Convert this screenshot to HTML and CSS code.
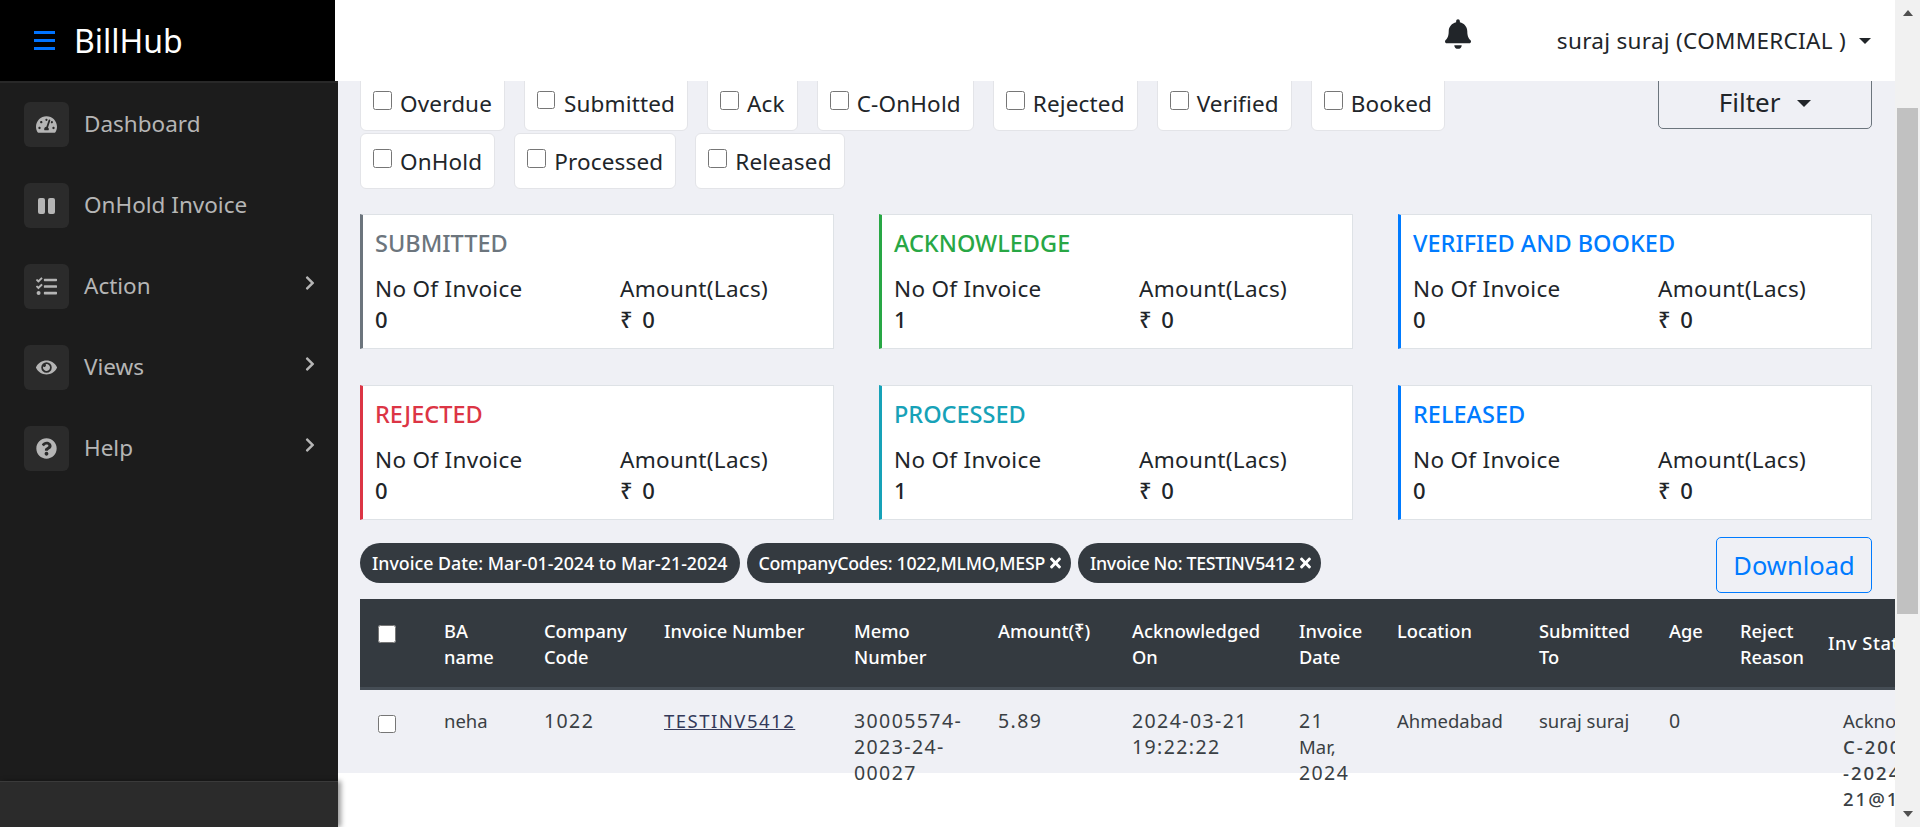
FILE: index.html
```html
<!DOCTYPE html>
<html lang="en">
<head>
    <meta charset="UTF-8">
    <meta name="viewport" content="width=device-width, initial-scale=1.0">
    <title>BillHub</title>
    <link rel="stylesheet" href="styles.css">
</head>
<body>
    <div class="app">
        <div class="page">
            <header class="topbar">
                <div class="brand">
                    <span class="burger"><i></i><i></i><i></i></span>
                    <span class="brand-name">BillHub</span>
                </div>
                <div class="topbar-right">
                    <svg class="bell" viewBox="0 0 448 512"><path d="M224 512c35.32 0 63.97-28.65 63.97-64H160.03c0 35.35 28.65 64 63.97 64zm215.39-149.71c-19.32-20.76-55.47-51.99-55.47-154.29 0-77.7-54.48-139.9-127.94-155.16V32c0-17.67-14.32-32-31.98-32s-31.98 14.33-31.98 32v20.84C118.56 68.1 64.08 130.3 64.08 208c0 102.3-36.15 133.53-55.47 154.29-6 6.45-8.66 14.16-8.61 21.71.11 16.4 12.98 32 32.1 32h383.8c19.12 0 32-15.6 32.1-32 .05-7.55-2.61-15.27-8.61-21.71z"/></svg>
                    <span class="user">suraj suraj (COMMERCIAL )</span>
                    <span class="caret"></span>
                </div>
            </header>

            <div class="layout">
                <aside class="sidebar">
                    <nav class="menu">
                        <a class="menu-item">
                            <span class="menu-icon"><svg viewBox="0 0 576 512"><path d="M288 32C128.94 32 0 160.94 0 320c0 52.8 14.25 102.26 39.06 144.8 5.61 9.62 16.3 15.2 27.44 15.2h443c11.14 0 21.83-5.58 27.44-15.2C561.75 422.26 576 372.8 576 320c0-159.06-128.94-288-288-288zm0 64c14.71 0 26.58 10.13 30.32 23.65-1.11 2.26-2.64 4.23-3.45 6.67l-9.22 27.67c-5.13 3.49-10.97 6.01-17.64 6.01-17.67 0-32-14.33-32-32S270.33 96 288 96zM96 384c-17.67 0-32-14.33-32-32s14.33-32 32-32 32 14.33 32 32-14.33 32-32 32zm48-160c-17.67 0-32-14.33-32-32s14.33-32 32-32 32 14.33 32 32-14.33 32-32 32zm246.77-72.41l-61.33 184C343.13 347.33 352 364.54 352 384c0 11.72-3.38 22.55-8.88 32H232.88c-5.5-9.45-8.88-20.28-8.88-32 0-33.94 26.5-61.43 59.9-63.59l61.34-184.01c4.17-12.56 17.73-19.45 30.36-15.17 12.57 4.19 19.35 17.79 15.17 30.36zm14.66 57.2l15.52-46.55c3.47-1.29 7.13-2.23 11.05-2.23 17.67 0 32 14.33 32 32s-14.33 32-32 32c-11.38-.01-20.89-6.28-26.57-15.22zM480 384c-17.67 0-32-14.33-32-32s14.33-32 32-32 32 14.33 32 32-14.33 32-32 32z"/></svg></span>
                            <span class="menu-label">Dashboard</span>
                        </a>
                        <a class="menu-item">
                            <span class="menu-icon"><span class="pause"><i></i><i></i></span></span>
                            <span class="menu-label">OnHold Invoice</span>
                        </a>
                        <a class="menu-item">
                            <span class="menu-icon"><svg viewBox="0 0 512 512"><path d="M139.61 35.5a12 12 0 0 0-17 0L58.93 98.81l-22.7-22.12a12 12 0 0 0-17 0L3.53 92.41a12 12 0 0 0 0 17l47.59 47.4a12.78 12.78 0 0 0 17.61 0l15.59-15.62L156.52 69a12.09 12.09 0 0 0 .09-17zm0 159.19a12 12 0 0 0-17 0l-63.68 63.72-22.7-22.1a12 12 0 0 0-17 0L3.53 252a12 12 0 0 0 0 17L51 316.5a12.77 12.77 0 0 0 17.6 0l15.7-15.69 72.2-72.22a12 12 0 0 0 .09-16.9zM64 368c-26.49 0-48.59 21.5-48.59 48S37.53 464 64 464a48 48 0 0 0 0-96zm432 16H208a16 16 0 0 0-16 16v32a16 16 0 0 0 16 16h288a16 16 0 0 0 16-16v-32a16 16 0 0 0-16-16zm0-320H208a16 16 0 0 0-16 16v32a16 16 0 0 0 16 16h288a16 16 0 0 0 16-16V80a16 16 0 0 0-16-16zm0 160H208a16 16 0 0 0-16 16v32a16 16 0 0 0 16 16h288a16 16 0 0 0 16-16v-32a16 16 0 0 0-16-16z"/></svg></span>
                            <span class="menu-label">Action</span>
                            <svg class="chevron" viewBox="0 0 320 512"><path d="M285.476 272.971L91.132 467.314c-9.373 9.373-24.569 9.373-33.941 0l-22.667-22.667c-9.357-9.357-9.375-24.522-.04-33.901L188.505 256 34.484 101.255c-9.335-9.379-9.317-24.544.04-33.901l22.667-22.667c9.373-9.373 24.569-9.373 33.941 0L285.475 239.03c9.373 9.372 9.373 24.568.001 33.941z"/></svg>
                        </a>
                        <a class="menu-item">
                            <span class="menu-icon"><svg viewBox="0 0 576 512"><path d="M572.52 241.4C518.29 135.59 410.93 64 288 64S57.68 135.64 3.48 241.41a32.35 32.35 0 0 0 0 29.19C57.71 376.41 165.07 448 288 448s230.32-71.64 284.52-177.41a32.35 32.35 0 0 0 0-29.19zM288 400a144 144 0 1 1 144-144 143.93 143.93 0 0 1-144 144zm0-240a95.31 95.31 0 0 0-25.31 3.79 47.85 47.85 0 0 1-66.9 66.9A95.78 95.78 0 1 0 288 160z"/></svg></span>
                            <span class="menu-label">Views</span>
                            <svg class="chevron" viewBox="0 0 320 512"><path d="M285.476 272.971L91.132 467.314c-9.373 9.373-24.569 9.373-33.941 0l-22.667-22.667c-9.357-9.357-9.375-24.522-.04-33.901L188.505 256 34.484 101.255c-9.335-9.379-9.317-24.544.04-33.901l22.667-22.667c9.373-9.373 24.569-9.373 33.941 0L285.475 239.03c9.373 9.372 9.373 24.568.001 33.941z"/></svg>
                        </a>
                        <a class="menu-item">
                            <span class="menu-icon"><svg viewBox="0 0 512 512"><path d="M504 256c0 136.997-111.043 248-248 248S8 392.997 8 256C8 119.083 119.043 8 256 8s248 111.083 248 248zM262.655 90c-54.497 0-89.255 22.957-116.549 63.758-3.536 5.286-2.353 12.415 2.715 16.258l34.699 26.31c5.205 3.947 12.621 3.008 16.665-2.122 17.864-22.658 30.113-35.797 57.303-35.797 20.429 0 45.698 13.148 45.698 32.958 0 14.976-12.363 22.667-32.534 33.976C247.128 238.528 216 254.941 216 296v4c0 6.627 5.373 12 12 12h56c6.627 0 12-5.373 12-12v-1.333c0-28.462 83.186-29.647 83.186-106.667 0-58.002-60.165-102-116.531-102zM256 338c-25.365 0-46 20.635-46 46 0 25.364 20.635 46 46 46s46-20.636 46-46c0-25.365-20.635-46-46-46z"/></svg></span>
                            <span class="menu-label">Help</span>
                            <svg class="chevron" viewBox="0 0 320 512"><path d="M285.476 272.971L91.132 467.314c-9.373 9.373-24.569 9.373-33.941 0l-22.667-22.667c-9.357-9.357-9.375-24.522-.04-33.901L188.505 256 34.484 101.255c-9.335-9.379-9.317-24.544.04-33.901l22.667-22.667c9.373-9.373 24.569-9.373 33.941 0L285.475 239.03c9.373 9.372 9.373 24.568.001 33.941z"/></svg>
                        </a>
                    </nav>
                    <div class="sidebar-footer"></div>
                </aside>

                <main class="content">
                    <section class="filters">
                        <div class="chips">
                            <label class="chip"><input type="checkbox"> Overdue</label>
                            <label class="chip chip-small"><input type="checkbox"> Submitted</label>
                            <label class="chip"><input type="checkbox"> Ack</label>
                            <label class="chip"><input type="checkbox"> C-OnHold</label>
                            <label class="chip"><input type="checkbox"> Rejected</label>
                            <label class="chip"><input type="checkbox"> Verified</label>
                            <label class="chip"><input type="checkbox"> Booked</label>
                            <label class="chip"><input type="checkbox"> OnHold</label>
                            <label class="chip"><input type="checkbox"> Processed</label>
                            <label class="chip"><input type="checkbox"> Released</label>
                        </div>
                        <button class="btn-filter">Filter <span class="caret caret-lg"></span></button>
                    </section>

                    <section class="cards">
                        <div class="card card-gray">
                            <h5>SUBMITTED</h5>
                            <div class="card-grid"><span>No Of Invoice</span><span>Amount(Lacs)</span><b>0</b><b>₹ 0</b></div>
                        </div>
                        <div class="card card-green">
                            <h5>ACKNOWLEDGE</h5>
                            <div class="card-grid"><span>No Of Invoice</span><span>Amount(Lacs)</span><b>1</b><b>₹ 0</b></div>
                        </div>
                        <div class="card card-blue">
                            <h5>VERIFIED AND BOOKED</h5>
                            <div class="card-grid"><span>No Of Invoice</span><span>Amount(Lacs)</span><b>0</b><b>₹ 0</b></div>
                        </div>
                        <div class="card card-red">
                            <h5>REJECTED</h5>
                            <div class="card-grid"><span>No Of Invoice</span><span>Amount(Lacs)</span><b>0</b><b>₹ 0</b></div>
                        </div>
                        <div class="card card-teal">
                            <h5>PROCESSED</h5>
                            <div class="card-grid"><span>No Of Invoice</span><span>Amount(Lacs)</span><b>1</b><b>₹ 0</b></div>
                        </div>
                        <div class="card card-blue">
                            <h5>RELEASED</h5>
                            <div class="card-grid"><span>No Of Invoice</span><span>Amount(Lacs)</span><b>0</b><b>₹ 0</b></div>
                        </div>
                    </section>

                    <section class="toolbar">
                        <div class="pills">
                            <span class="pill">Invoice Date: Mar-01-2024 to Mar-21-2024</span>
                            <span class="pill pill-close">CompanyCodes: 1022,MLMO,MESP <svg viewBox="0 0 352 512"><path d="M242.72 256l100.07-100.07c12.28-12.28 12.28-32.19 0-44.48l-22.24-22.24c-12.28-12.28-32.19-12.28-44.48 0L176 189.28 75.93 89.21c-12.28-12.28-32.19-12.28-44.48 0L9.21 111.45c-12.28 12.28-12.28 32.19 0 44.48L109.28 256 9.21 356.07c-12.28 12.28-12.28 32.19 0 44.48l22.24 22.24c12.28 12.28 32.2 12.28 44.48 0L176 322.72l100.07 100.07c12.28 12.28 32.2 12.28 44.48 0l22.24-22.24c12.28-12.28 12.28-32.19 0-44.48L242.72 256z"/></svg></span>
                            <span class="pill pill-close">Invoice No: TESTINV5412 <svg viewBox="0 0 352 512"><path d="M242.72 256l100.07-100.07c12.28-12.28 12.28-32.19 0-44.48l-22.24-22.24c-12.28-12.28-32.19-12.28-44.48 0L176 189.28 75.93 89.21c-12.28-12.28-32.19-12.28-44.48 0L9.21 111.45c-12.28 12.28-12.28 32.19 0 44.48L109.28 256 9.21 356.07c-12.28 12.28-12.28 32.19 0 44.48l22.24 22.24c12.28 12.28 32.2 12.28 44.48 0L176 322.72l100.07 100.07c12.28 12.28 32.2 12.28 44.48 0l22.24-22.24c12.28-12.28 12.28-32.19 0-44.48L242.72 256z"/></svg></span>
                        </div>
                        <button class="btn-download">Download</button>
                    </section>

                    <table class="invoices">
                        <colgroup>
                            <col class="c-check"><col class="c-ba"><col class="c-company"><col class="c-invoice"><col class="c-memo"><col class="c-amount"><col class="c-ack"><col class="c-date"><col class="c-location"><col class="c-submitted"><col class="c-age"><col class="c-reject"><col class="c-status">
                        </colgroup>
                        <thead>
                            <tr>
                                <th class="cell-check"><input type="checkbox"></th>
                                <th>BA name</th>
                                <th>Company Code</th>
                                <th>Invoice Number</th>
                                <th>Memo Number</th>
                                <th>Amount(₹)</th>
                                <th>Acknowledged On</th>
                                <th>Invoice Date</th>
                                <th>Location</th>
                                <th>Submitted To</th>
                                <th>Age</th>
                                <th>Reject Reason</th>
                                <th class="th-status">Inv Status</th>
                            </tr>
                        </thead>
                        <tbody>
                            <tr>
                                <td class="cell-check"><input type="checkbox"></td>
                                <td>neha</td>
                                <td class="num">1022</td>
                                <td class="inv-no"><a href="#">TESTINV5412</a></td>
                                <td class="num">30005574-<br>2023-24-<br>00027</td>
                                <td class="num">5.89</td>
                                <td class="num">2024-03-21<br>19:22:22</td>
                                <td class="num">21<br><span class="month">Mar,</span><br>2024</td>
                                <td>Ahmedabad</td>
                                <td>suraj suraj</td>
                                <td class="num">0</td>
                                <td></td>
                                <td class="td-status">Acknowledged<br><b>C-20030<br>-2024-03-<br>21@19:22</b></td>
                            </tr>
                        </tbody>
                    </table>
                </main>
            </div>
        </div>

        <div class="scrollbar">
            <span class="arrow arrow-up"></span>
            <span class="thumb"></span>
            <span class="arrow arrow-down"></span>
        </div>
    </div>
</body>
</html>
```

FILE: styles.css
```css
* {
    box-sizing: border-box;
}

body {
    margin: 0;
    font-family: "Noto Sans", sans-serif;
    color: #212529;
    overflow: hidden;
}

.app {
    display: flex;
    height: 100vh;
}

.page {
    flex: 1;
    min-width: 0;
    display: flex;
    flex-direction: column;
}

/* top bar */
.topbar {
    display: flex;
    height: 81px;
    flex-shrink: 0;
}

.brand {
    width: 335px;
    background: #000;
    color: #fff;
    display: flex;
    align-items: center;
    padding-left: 34px;
}

.burger {
    display: flex;
    flex-direction: column;
    gap: 5px;
    width: 21px;
    margin-right: 19px;
}

.burger i {
    display: block;
    height: 3px;
    background: #0073ff;
}

.brand-name {
    font-size: 32px;
}

.topbar-right {
    flex: 1;
    background: #fff;
    display: flex;
    align-items: center;
    justify-content: flex-end;
    padding-right: 24px;
}

.bell {
    width: 26px;
    height: 30px;
    fill: #212529;
    margin-right: 86px;
    margin-top: -14px;
}

.user {
    font-size: 22.5px;
    letter-spacing: 0.3px;
    margin-right: 13px;
}

.caret {
    width: 0;
    height: 0;
    border-top: 6px solid #212529;
    border-left: 6px solid transparent;
    border-right: 6px solid transparent;
}

.caret-lg {
    display: inline-block;
    margin-left: 10px;
    border-top-width: 7px;
    border-left-width: 7px;
    border-right-width: 7px;
    vertical-align: 5px;
}

/* sidebar */
.layout {
    flex: 1;
    display: flex;
    min-height: 0;
}

.sidebar {
    width: 338px;
    flex-shrink: 0;
    background: #1c1c1c;
    border-top: 2px solid #282828;
    display: flex;
    flex-direction: column;
    position: relative;
}

.menu {
    flex: 1;
    padding: 19px 24px 0;
}

.menu-item {
    display: flex;
    align-items: center;
    height: 45px;
    margin-bottom: 36px;
    color: #b5b5b5;
    font-size: 22.5px;
}

.menu-icon {
    width: 45px;
    height: 45px;
    margin-right: 15px;
    background: #2b2b2b;
    border-radius: 6px;
    display: flex;
    align-items: center;
    justify-content: center;
}

.menu-icon svg {
    width: 21px;
    height: 21px;
    fill: #b5b5b5;
}

.pause {
    display: flex;
    gap: 3px;
}

.pause i {
    display: block;
    width: 7px;
    height: 16px;
    border-radius: 2px;
    background: #b5b5b5;
}

.menu-label {
    flex: 1;
    margin-top: -3px;
}

.chevron {
    width: 10px;
    height: 16px;
    fill: #b5b5b5;
    margin: -8px -1px 0 0;
}

.sidebar-footer {
    height: 46px;
    background: #2b2b2b;
    border-top: 1px solid #3a3a3a;
    box-shadow: 3px 0 5px rgba(0, 0, 0, 0.4);
}

/* main area */
.content {
    flex: 1;
    min-width: 0;
    overflow: hidden;
    padding-left: 22px;
    background: linear-gradient(#eff0f5 692px, #fff 692px);
}

.filters {
    display: flex;
    align-items: flex-start;
    margin-top: -6px;
    padding-right: 23px;
    height: 114px;
}

.chips {
    flex: 1;
    display: flex;
    flex-wrap: wrap;
    gap: 2px 19px;
    padding-right: 100px;
}

.chip {
    display: flex;
    align-items: center;
    height: 56px;
    padding: 0 12px;
    background: #fff;
    border: 1px solid #e3e4e8;
    border-radius: 6px;
    font-size: 22.5px;
    letter-spacing: 0.15px;
    white-space: nowrap;
}

.chip input {
    width: 19px;
    height: 19px;
    margin: -6px 8px 0 0;
}

.chip-small input {
    width: 17.5px;
    height: 17.5px;
    margin-right: 9.5px;
}

.btn-filter {
    width: 214px;
    height: 54px;
    flex-shrink: 0;
    background: transparent;
    border: 1px solid #6c757d;
    border-radius: 5px;
    font-family: inherit;
    font-size: 26px;
    color: #212529;
}

.cards {
    display: grid;
    grid-template-columns: repeat(3, 474px);
    gap: 36px 45px;
    margin-top: 25px;
}

.card {
    height: 135px;
    background: #fff;
    border: 1px solid #dee2e6;
    border-left: 3px solid #6c757d;
    padding: 11px 12px 0;
}

.card h5 {
    margin: 0 0 14px;
    font-size: 23.5px;
    line-height: 34px;
    font-weight: 500;
}

.card-gray h5 { color: #6c757d; }
.card-gray { border-left-color: #6c757d; }
.card-green h5 { color: #28a745; }
.card-green { border-left-color: #28a745; }
.card-blue h5 { color: #007bff; }
.card-blue { border-left-color: #007bff; }
.card-red h5 { color: #dc3545; }
.card-red { border-left-color: #dc3545; }
.card-teal h5 { color: #17a2b8; }
.card-teal { border-left-color: #17a2b8; }

.card-grid {
    display: grid;
    grid-template-columns: 245px 1fr;
    font-size: 22.5px;
    letter-spacing: 0.3px;
    line-height: 30px;
}

.card-grid b {
    font-weight: 500;
    font-size: 22px;
    letter-spacing: 2px;
}

.toolbar {
    display: flex;
    justify-content: space-between;
    align-items: flex-start;
    height: 62px;
    margin-top: 17px;
    padding-right: 23px;
}

.pills {
    display: flex;
    gap: 7px;
    margin-top: 6px;
}

.pill {
    display: flex;
    align-items: center;
    gap: 5px;
    height: 40px;
    padding: 0 12px;
    background: #343a40;
    color: #fff;
    border-radius: 20px;
    font-size: 17.8px;
    font-weight: 500;
    white-space: nowrap;
}

.pill-close {
    gap: 5px;
    padding-right: 10px;
    letter-spacing: -0.3px;
}

.pill svg {
    width: 11px;
    height: 16px;
    fill: #fff;
}

.btn-download {
    width: 156px;
    height: 56px;
    background: transparent;
    border: 1px solid #007bff;
    border-radius: 5px;
    color: #007bff;
    font-family: inherit;
    font-size: 25.5px;
}

/* table */
.invoices {
    table-layout: fixed;
    border-collapse: separate;
    border-spacing: 0;
    width: 1735px;
    font-size: 18.5px;
    line-height: 26px;
}

.c-check { width: 72px; }
.c-ba { width: 100px; }
.c-company { width: 120px; }
.c-invoice { width: 190px; }
.c-memo { width: 144px; }
.c-amount { width: 134px; }
.c-ack { width: 167px; }
.c-date { width: 98px; }
.c-location { width: 142px; }
.c-submitted { width: 130px; }
.c-age { width: 71px; }
.c-reject { width: 88px; }
.c-status { width: 279px; }

.invoices th {
    height: 91px;
    padding: 19px 12px 0;
    background: #343a40;
    border-bottom: 3px solid #454d55;
    color: #fff;
    font-size: 18.3px;
    font-weight: 500;
    text-align: left;
    vertical-align: top;
}

.invoices th.th-status {
    vertical-align: middle;
    padding-top: 0;
    white-space: nowrap;
    letter-spacing: 0.5px;
}

.invoices td {
    padding: 18px 12px 0;
    color: #3a3f44;
    vertical-align: top;
}

.invoices td.num {
    font-size: 19.5px;
    letter-spacing: 1.4px;
}

.month {
    font-size: 18.5px;
    letter-spacing: 0;
}

.inv-no {
    letter-spacing: 1.5px;
}

.invoices td.td-status {
    padding-left: 27px;
    white-space: nowrap;
}

.td-status b {
    font-weight: 500;
    letter-spacing: 2px;
}

.invoices td a {
    color: #343a5a;
}

.cell-check input {
    width: 18px;
    height: 18px;
    margin: 7px 0 0 6px;
}

/* page scrollbar */
.scrollbar {
    width: 25px;
    flex-shrink: 0;
    background: #f1f1f1;
    display: flex;
    flex-direction: column;
    align-items: center;
}

.arrow {
    width: 0;
    height: 0;
    border-left: 5px solid transparent;
    border-right: 5px solid transparent;
}

.arrow-up {
    margin-top: 10px;
    border-bottom: 6px solid #505050;
}

.thumb {
    width: 21px;
    height: 506px;
    margin: 92px 0 auto;
    background: #c1c1c1;
}

.arrow-down {
    margin-bottom: 10px;
    border-top: 6px solid #505050;
}
```
